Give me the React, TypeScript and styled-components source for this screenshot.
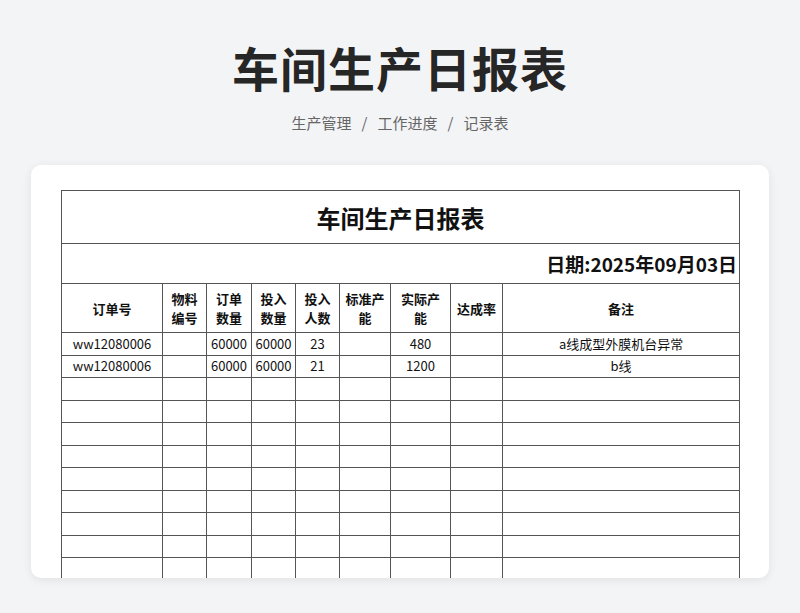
import React from 'react'
import styled, { createGlobalStyle } from 'styled-components'

const Global = createGlobalStyle`
  html, body { margin: 0; background: #f3f4f6; }
  body { font-family: "Noto Sans CJK SC", "Noto Sans", sans-serif; }
`

const Page = styled.div`
  width: 800px;
  height: 613px;
  display: flex;
  flex-direction: column;
  align-items: center;
  box-sizing: border-box;
  padding-top: 36px;
  overflow: hidden;
`

const Heading = styled.h1`
  margin: 0;
  font-size: 47px;
  line-height: 62px;
  font-weight: 700;
  color: #262626;
  letter-spacing: 1px;
`

const Crumbs = styled.div`
  margin-top: 14px;
  font-size: 15px;
  color: #666;
  display: flex;
  gap: 10px;
`

const Card = styled.div`
  margin-top: 32px;
  width: 738px;
  height: 413px;
  background: #fff;
  border-radius: 10px;
  box-shadow: 0 2px 10px rgba(0, 0, 0, 0.08);
  padding: 25px 30px 0 30px;
  box-sizing: border-box;
  overflow: hidden;
`

const Table = styled.table`
  width: 678px;
  border-collapse: collapse;
  table-layout: fixed;
  font-family: "Noto Sans CJK SC", sans-serif;
  color: #111;
  td, th { border: 1px solid #555; padding: 0; text-align: center; }
`

const TitleCell = styled.td`
  height: 52px;
  font-size: 24px;
  font-weight: 700;
`

const DateCell = styled.td`
  height: 39px;
  font-size: 19px;
  font-weight: 700;
  && { text-align: right; }
  padding-right: 2px !important;
`

const Head = styled.th`
  height: 48px;
  font-size: 13px;
  font-weight: 700;
  line-height: 19px;
`

const Cell = styled.td`
  height: 21.5px;
  font-size: 13px;
  line-height: 18px;
  white-space: nowrap;
`

const widths = [101, 44, 45, 44, 44, 51, 60, 52, 237]
const headers = ['订单号', '物料\n编号', '订单\n数量', '投入\n数量', '投入\n人数', '标准产\n能', '实际产\n能', '达成率', '备注']
const rows = [
  ['ww12080006', '', '60000', '60000', '23', '', '480', '', 'a线成型外膜机台异常'],
  ['ww12080006', '', '60000', '60000', '21', '', '1200', '', 'b线'],
  ...Array.from({ length: 10 }, () => Array(9).fill('')),
]

export default function App() {
  return (
    <Page>
      <Global />
      <Heading>车间生产日报表</Heading>
      <Crumbs>
        <span>生产管理</span><span>/</span><span>工作进度</span><span>/</span><span>记录表</span>
      </Crumbs>
      <Card>
        <Table>
          <colgroup>
            {widths.map((w, i) => <col key={i} style={{ width: w }} />)}
          </colgroup>
          <tbody>
            <tr><TitleCell colSpan={9}>车间生产日报表</TitleCell></tr>
            <tr><DateCell colSpan={9}>日期:2025年09月03日</DateCell></tr>
            <tr>
              {headers.map((h, i) => (
                <Head key={i}>{h.split('\n').map((p, j) => <div key={j}>{p}</div>)}</Head>
              ))}
            </tr>
            {rows.map((r, i) => (
              <tr key={i}>{r.map((c, j) => <Cell key={j}>{c}</Cell>)}</tr>
            ))}
          </tbody>
        </Table>
      </Card>
    </Page>
  )
}
